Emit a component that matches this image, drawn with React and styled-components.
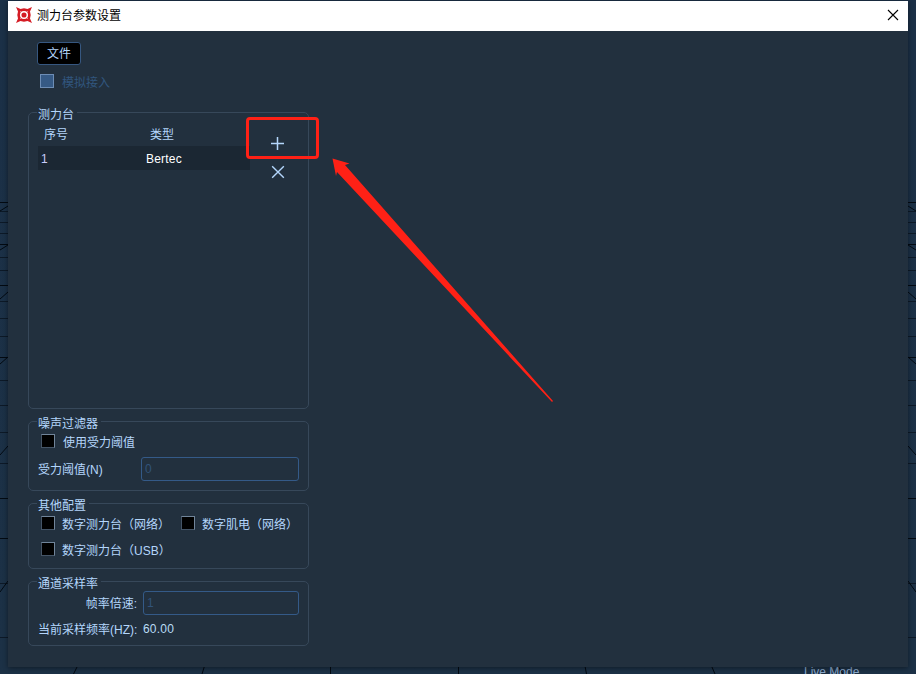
import React from "react";
import styled, { createGlobalStyle } from "styled-components";

const GlobalStyle = createGlobalStyle`
  * { box-sizing: border-box; }
  body {
    margin: 0;
    overflow: hidden;
    font-family: "Liberation Sans", "Noto Sans CJK SC", sans-serif;
    font-size: 12px;
    color: #b4d6fc;
  }
`;

const Desktop = styled.div`
  position: relative;
  width: 916px;
  height: 674px;
  padding: 1px 8px 7px;
  overflow: hidden;
  background: linear-gradient(#1b3047, #1c3146);
`;

const FloorGrid = styled.svg`
  position: absolute;
  inset: 0;
`;

const StatusText = styled.span`
  position: absolute;
  left: 804px;
  top: 665px;
  line-height: 14px;
  color: #8ca9cb;
`;

const Window = styled.main`
  position: relative;
  width: 900px;
  height: 666px;
  background: #22303e;
  box-shadow: 0 1px 5px rgba(0, 0, 0, 0.45);
`;

const TitleBar = styled.header`
  display: flex;
  align-items: center;
  height: 30px;
  padding: 0 9px 2px 8px;
  background: #fff;
  color: #000;
`;

const WindowTitle = styled.h1`
  flex: 1;
  margin: 2px 0 0 5px;
  font-size: 12px;
  font-weight: 400;
  line-height: 16px;
`;

const IconButton = styled.button`
  display: flex;
  padding: 0;
  border: 0;
  background: none;
  color: inherit;
`;

const Content = styled.div`
  display: flex;
  flex-direction: column;
  width: 301px;
  padding: 11px 0 0 20px;
`;

const FileButton = styled.button`
  width: 44px;
  height: 23px;
  margin-left: 9px;
  padding: 2px 0 0;
  border: 1px solid #365780;
  border-radius: 3px;
  background: #000;
  color: #b4d6fc;
  font: inherit;
  line-height: 19px;
`;

const CheckLabel = styled.label`
  display: flex;
  align-items: center;
  gap: ${(p) => p.$gap || "8px"};
  width: ${(p) => p.$width || "auto"};
  height: 16px;
  white-space: nowrap;
  color: ${(p) => (p.$disabled ? "#31567f" : "#b4d6fc")};
`;

const CheckText = styled.span`
  margin-top: -2px;
`;

const CheckBox = styled.span`
  width: 14px;
  height: 14px;
  margin-top: -2px;
  flex: none;
  border: 1px solid;
  border-color: ${(p) => (p.$disabled ? "#6d8db5" : "#71859a #71859a #445466 #445466")};
  background: ${(p) => (p.$disabled ? "#365a85" : "#000")};
`;

const SimulateRow = styled.div`
  height: 47px;
  padding: 9px 0 0 12px;
`;

const Group = styled.section`
  height: ${(p) => p.$height};
  margin-bottom: 12px;
  padding: 0 9px;
  border: 1px solid #37485a;
  border-radius: 5px;
`;

const GroupTitle = styled.h2`
  width: max-content;
  height: 14px;
  margin: -6px 0 0 -1px;
  padding: 0 3px 0 1px;
  background: #22303e;
  font-size: 12px;
  font-weight: 400;
  line-height: 16px;
`;

const PlateBody = styled.div`
  display: flex;
`;

const Table = styled.div`
  flex: none;
  width: 212px;
`;

const TableRow = styled.div`
  display: grid;
  grid-template-columns: 105px 1fr;
  height: 24px;
  padding-left: 3px;
  line-height: 26px;
  letter-spacing: 0.2px;
  background: #1b2733;
  color: #fff;
`;

const TableHead = styled(TableRow)`
  height: 25px;
  padding-left: 6px;
  line-height: 28px;
  letter-spacing: 0;
  background: none;
  color: #b4d6fc;
  grid-template-columns: 106px 1fr;
`;

const RowIndex = styled.span`
  color: #c9ccfa;
`;

const PlateActions = styled.div`
  display: flex;
  flex: none;
  flex-direction: column;
  align-items: center;
  gap: 14px;
  width: 55px;
  padding-top: 15px;
`;

const FormRow = styled.div`
  display: flex;
  align-items: center;
  height: 24px;
  margin-top: ${(p) => p.$top || "0"};
  white-space: nowrap;
`;

const CheckRow = styled(FormRow)`
  height: 16px;
  padding-left: 3px;
`;

const FieldLabel = styled.span`
  flex: none;
  width: ${(p) => p.$width};
  margin-top: -1px;
  text-align: ${(p) => p.$align || "left"};
`;

const Input = styled.input`
  width: ${(p) => p.$width};
  height: 24px;
  margin-left: ${(p) => p.$left || "0"};
  padding: 0 3px;
  border: 1px solid #345a88;
  border-radius: 3px;
  outline: 0;
  background: transparent;
  color: #31537a;
  font: inherit;
  font-size: 12px;
`;

const RateValue = styled.output`
  margin-left: 6px;
  letter-spacing: 0.2px;
  color: #b9dcf6;
`;

const Highlight = styled.div`
  position: absolute;
  left: 246px;
  top: 117px;
  width: 73px;
  height: 42px;
  border: 3px solid #ff2116;
  border-radius: 4px;
`;

const Arrow = styled.svg`
  position: absolute;
  left: 330px;
  top: 155px;
`;

const FLOOR_ROWS = [202, 211, 222, 233, 244, 257, 270, 285, 301, 318, 336, 357, 380, 405, 432, 463, 498, 538, 583, 637];
const STRONG_ROWS = [202, 244, 285, 357, 498, 538];
const FLOOR_DIAGONALS = [[211, 206], [250, 245], [299, 292], [364, 357], [455, 446], [592, 581]];

function Floor() {
  return (
    <FloorGrid width="916" height="674" fill="none" stroke="#030a12">
      {FLOOR_ROWS.map((y) => (
        <path key={y} d={`M0 ${y + 0.5}H916`} opacity={STRONG_ROWS.includes(y) ? 1 : 0.6} />
      ))}
      {FLOOR_DIAGONALS.map(([outer, inner]) => (
        <path key={outer} d={`M0 ${outer}L8 ${inner}M908 ${inner}L916 ${outer}`} />
      ))}
      <path d="M77.500 666L73.500 674M204.500 666L202 674M330.500 666V674M458.500 666V674M585 666L586.500 674M711.500 666L715 674M838 666L843 674" />
    </FloorGrid>
  );
}

function Logo() {
  return (
    <svg width="16" height="16" viewBox="0 0 16 16">
      <path d="M0 0L4.500 2L8 1.300L11.500 2L16 0L14 4.500L14.700 8L14 11.500L16 16L11.500 14L8 14.700L4.500 14L0 16L2 11.500L1.300 8L2 4.500Z" fill="#d51c25" />
      <circle cx="8" cy="8" r="3.300" fill="none" stroke="#fff" strokeWidth="1.500" />
      <path d="M4.500 4.500L5.700 5.700M11.500 4.500L10.300 5.700M4.500 11.500L5.700 10.300M11.500 11.500L10.300 10.300" stroke="#fff" />
    </svg>
  );
}

function Cross({ size, width }) {
  return (
    <svg width={size} height={size} viewBox="0 0 12 12" stroke="currentColor" strokeWidth={width}>
      <path d="M1 1L11 11M11 1L1 11" />
    </svg>
  );
}

function Check({ children, disabled, width, gap }) {
  return (
    <CheckLabel $disabled={disabled} $width={width} $gap={gap}>
      <CheckBox $disabled={disabled} />
      <CheckText>{children}</CheckText>
    </CheckLabel>
  );
}

export default function App() {
  return (
    <Desktop>
      <GlobalStyle />
      <Floor />
      <StatusText>Live Mode</StatusText>
      <Window>
        <TitleBar>
          <Logo />
          <WindowTitle>测力台参数设置</WindowTitle>
          <IconButton aria-label="关闭"><Cross size={12} width={1.1} /></IconButton>
        </TitleBar>
        <Content>
          <FileButton>文件</FileButton>
          <SimulateRow><Check disabled>模拟接入</Check></SimulateRow>

          <Group $height="297px">
            <GroupTitle>测力台</GroupTitle>
            <PlateBody>
              <Table>
                <TableHead><span>序号</span><span>类型</span></TableHead>
                <TableRow><RowIndex>1</RowIndex><span>Bertec</span></TableRow>
              </Table>
              <PlateActions>
                <IconButton aria-label="添加">
                  <svg width="15" height="15" stroke="currentColor" strokeWidth="1.500">
                    <path d="M7.500 1V14M1 7.500H14" />
                  </svg>
                </IconButton>
                <IconButton aria-label="删除"><Cross size={14} width={1.2} /></IconButton>
              </PlateActions>
            </PlateBody>
          </Group>

          <Group $height="70px">
            <GroupTitle>噪声过滤器</GroupTitle>
            <CheckRow $top="4px"><Check>使用受力阈值</Check></CheckRow>
            <FormRow $top="7px">
              <FieldLabel $width="103px">受力阈值(N)</FieldLabel>
              <Input $width="158px" defaultValue="0" disabled />
            </FormRow>
          </Group>

          <Group $height="66px">
            <GroupTitle>其他配置</GroupTitle>
            <CheckRow $top="4px">
              <Check width="140px" gap="7px">数字测力台（网络）</Check>
              <Check gap="7px">数字肌电（网络）</Check>
            </CheckRow>
            <CheckRow $top="10px"><Check gap="7px">数字测力台（USB）</Check></CheckRow>
          </Group>

          <Group $height="65px">
            <GroupTitle>通道采样率</GroupTitle>
            <FormRow $top="1px">
              <FieldLabel $width="99px" $align="right">帧率倍速:</FieldLabel>
              <Input $width="156px" $left="6px" defaultValue="1" disabled />
            </FormRow>
            <FormRow $top="2px">
              <FieldLabel $width="99px">当前采样频率(HZ):</FieldLabel>
              <RateValue>60.00</RateValue>
            </FormRow>
          </Group>
        </Content>
      </Window>
      <Highlight />
      <Arrow width="226" height="250">
        <path d="M2.500 3.500L19.500 8.500L15 10L223 246L222 247L7 17L6 21Z" fill="#ff2116" />
      </Arrow>
    </Desktop>
  );
}
